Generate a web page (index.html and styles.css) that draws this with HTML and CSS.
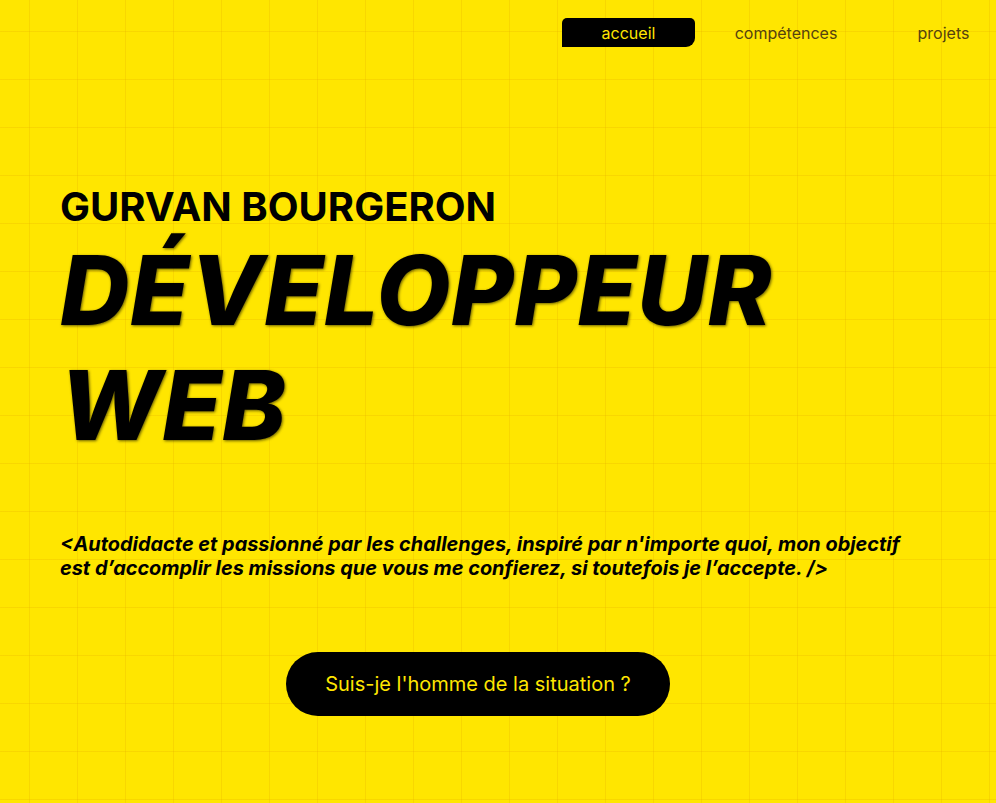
FILE: index.html
```html
<!DOCTYPE html>
<html lang="fr">
<head>
<meta charset="utf-8">
<title>Gurvan Bourgeron</title>
<link rel="stylesheet" href="styles.css">
</head>
<body>
<header class="topbar">
  <nav class="nav">
    <a class="nav-item active" href="#">accueil</a>
    <a class="nav-item" href="#">compétences</a>
    <a class="nav-item" href="#">projets</a>
  </nav>
</header>
<main class="hero">
  <h2 class="name">GURVAN BOURGERON</h2>
  <h1 class="title">DÉVELOPPEUR WEB</h1>
  <p class="tagline">&lt;Autodidacte et passionné par les challenges, inspiré par n'importe quoi, mon objectif est d’accomplir les missions que vous me confierez, si toutefois je l’accepte. /&gt;</p>
  <div class="cta-row">
    <a class="cta" href="#">Suis-je l'homme de la situation ?</a>
  </div>
</main>
</body>
</html>
```

FILE: styles.css
```css
html, body {
  margin: 0;
  padding: 0;
}
body {
  height: 803px;
  overflow: hidden;
  background-color: #ffe600;
  background-image:
    linear-gradient(to right, rgba(225, 165, 0, 0.22) 1px, transparent 1px),
    linear-gradient(to bottom, rgba(225, 165, 0, 0.22) 1px, transparent 1px);
  background-size: 48px 48px;
  background-position: 29px 31px;
  font-family: Inter, "Noto Sans", sans-serif;
  color: #000;
}
.topbar {
  padding-top: 18px;
  overflow: hidden;
}
.nav {
  display: flex;
  gap: 24.5px;
  padding-left: 562px;
  width: 1200px;
}
.nav-item {
  flex: 0 0 133px;
  height: 29px;
  display: flex;
  align-items: center;
  justify-content: center;
  font-size: 16px;
  color: #55420f;
  text-decoration: none;
}
.nav-item.active {
  background: #000;
  color: #ffe600;
  border-radius: 5px 5px 9px 0;
}
.hero {
  padding: 136px 60px 0 60px;
}
.name {
  margin: 0;
  font-size: 40px;
  font-weight: 700;
  line-height: 1.21;
}
.title {
  margin: 2px 0 0;
  font-size: 96px;
  font-weight: 800;
  font-style: italic;
  line-height: 115px;
  letter-spacing: 0.6px;
  text-shadow: 1px 1px 3px rgba(0, 0, 0, 0.6);
}
.tagline {
  max-width: 852px;
  margin: 69px 0 0;
  font-size: 19.9px;
  font-weight: 700;
  font-style: italic;
  line-height: 24px;
}
.cta-row {
  width: 836px;
  display: flex;
  justify-content: center;
  margin-top: 72px;
}
.cta {
  width: 384px;
  height: 64px;
  box-sizing: border-box;
  display: flex;
  align-items: center;
  justify-content: center;
  background: #000;
  color: #ffe600;
  border-radius: 32px;
  font-size: 20px;
  text-decoration: none;
}
```
